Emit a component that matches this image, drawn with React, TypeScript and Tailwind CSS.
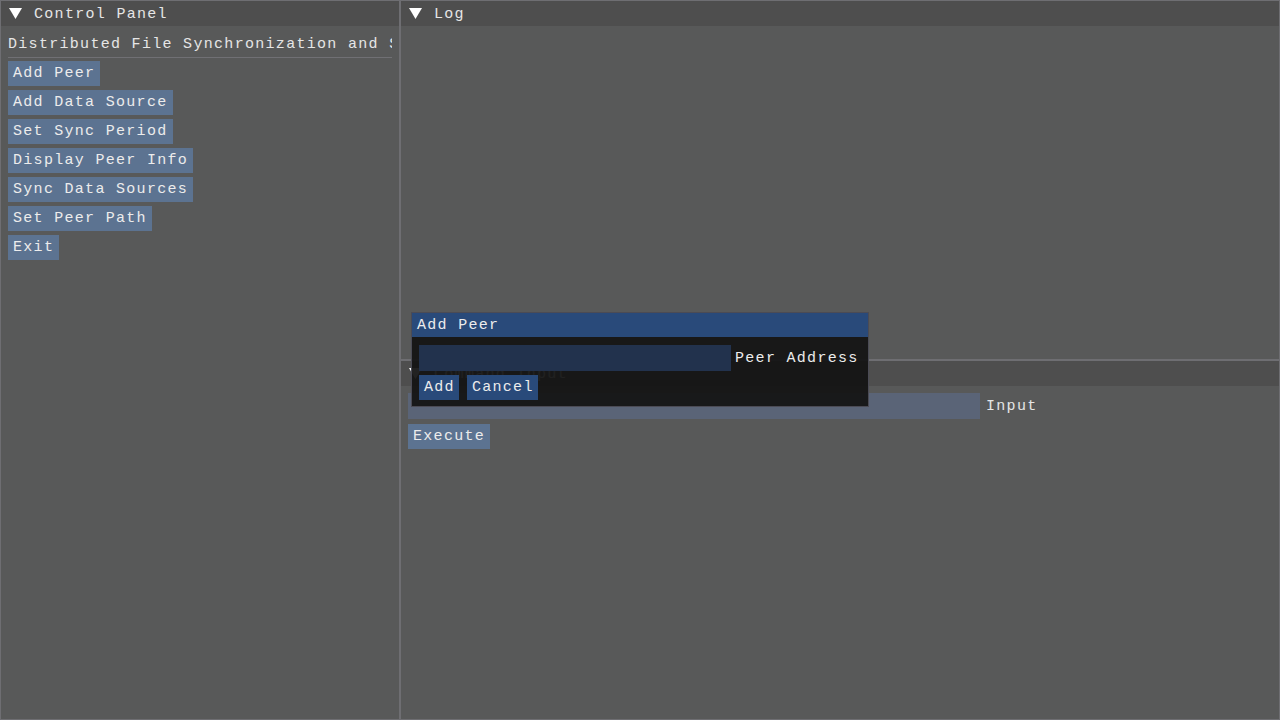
import React from "react";

const mono = { fontFamily: '"Liberation Mono", "DejaVu Sans Mono", monospace' };

function Arrow() {
  return (
    <svg width="13" height="11" viewBox="0 0 13 11" className="shrink-0">
      <polygon points="0,0 13,0 6.5,11" fill="#ffffff" />
    </svg>
  );
}

function TitleBar({ title }: { title: string }) {
  return (
    <div className="h-[25px] bg-[#4e4e4e] flex items-center pl-[8px] gap-[12px] text-[#e6e6e6] shrink-0">
      <Arrow />
      <span className="leading-none pt-[2px]">{title}</span>
    </div>
  );
}

function Btn({ label, blue }: { label: string; blue?: boolean }) {
  return (
    <div
      className={
        "h-[25px] flex items-center pt-[2px] pl-[5px] self-start text-[#ececec] " +
        (blue ? "bg-[#294a7a] pr-[4px]" : "bg-[#5c7391] pr-[5px]")
      }
    >
      {label}
    </div>
  );
}

const actions = [
  "Add Peer",
  "Add Data Source",
  "Set Sync Period",
  "Display Peer Info",
  "Sync Data Sources",
  "Set Peer Path",
  "Exit",
];

export default function App() {
  return (
    <div
      className="relative w-[1280px] h-[720px] bg-[#585959] text-[15px] tracking-[1.3px] flex overflow-hidden"
      style={mono}
    >
      {/* Control Panel */}
      <div className="w-[400px] h-full border border-[#6e6e72] flex flex-col">
        <TitleBar title="Control Panel" />
        <div className="px-[7px] pt-[7px] flex flex-col">
          <div className="h-[21px] leading-[23px] whitespace-nowrap overflow-hidden text-[#e6e6e6]">
            Distributed File Synchronization and Sync Tool
          </div>
          <div className="mt-[3px] h-px bg-[#707074]" />
          <div className="mt-[3px] flex flex-col gap-[4px]">
            {actions.map((a) => (
              <Btn key={a} label={a} />
            ))}
          </div>
        </div>
      </div>

      {/* Right column */}
      <div className="flex-1 flex flex-col">
        <div className="h-[360px] border border-[#6e6e72] flex flex-col">
          <TitleBar title="Log" />
        </div>
        <div className="h-[360px] border border-[#6e6e72] flex flex-col">
          <TitleBar title="Command Input" />
          <div className="px-[7px] pt-[7px] flex flex-col gap-[5px]">
            <div className="flex items-center gap-[6px]">
              <div className="w-[572px] h-[26px] bg-[#5a6477]" />
              <span className="text-[#e6e6e6] pt-[2px]">Input</span>
            </div>
            <Btn label="Execute" />
          </div>
        </div>
      </div>

      {/* Add Peer popup */}
      <div className="absolute left-[411px] top-[312px] w-[458px] h-[95px] border border-[#4b4b55] bg-[#141414]/[0.94] flex flex-col">
        <div className="h-[24px] bg-[#294a7a] flex items-center pl-[5px] pt-[3px] text-[#ececec] shrink-0">
          Add Peer
        </div>
        <div className="px-[7px] pt-[8px] flex flex-col gap-[4px]">
          <div className="flex items-center gap-[4px]">
            <div className="w-[312px] h-[26px] bg-[#22324d]" />
            <span className="text-[#ececec] pt-[2px]">Peer Address</span>
          </div>
          <div className="flex gap-[8px]">
            <Btn label="Add" blue />
            <Btn label="Cancel" blue />
          </div>
        </div>
      </div>
    </div>
  );
}
